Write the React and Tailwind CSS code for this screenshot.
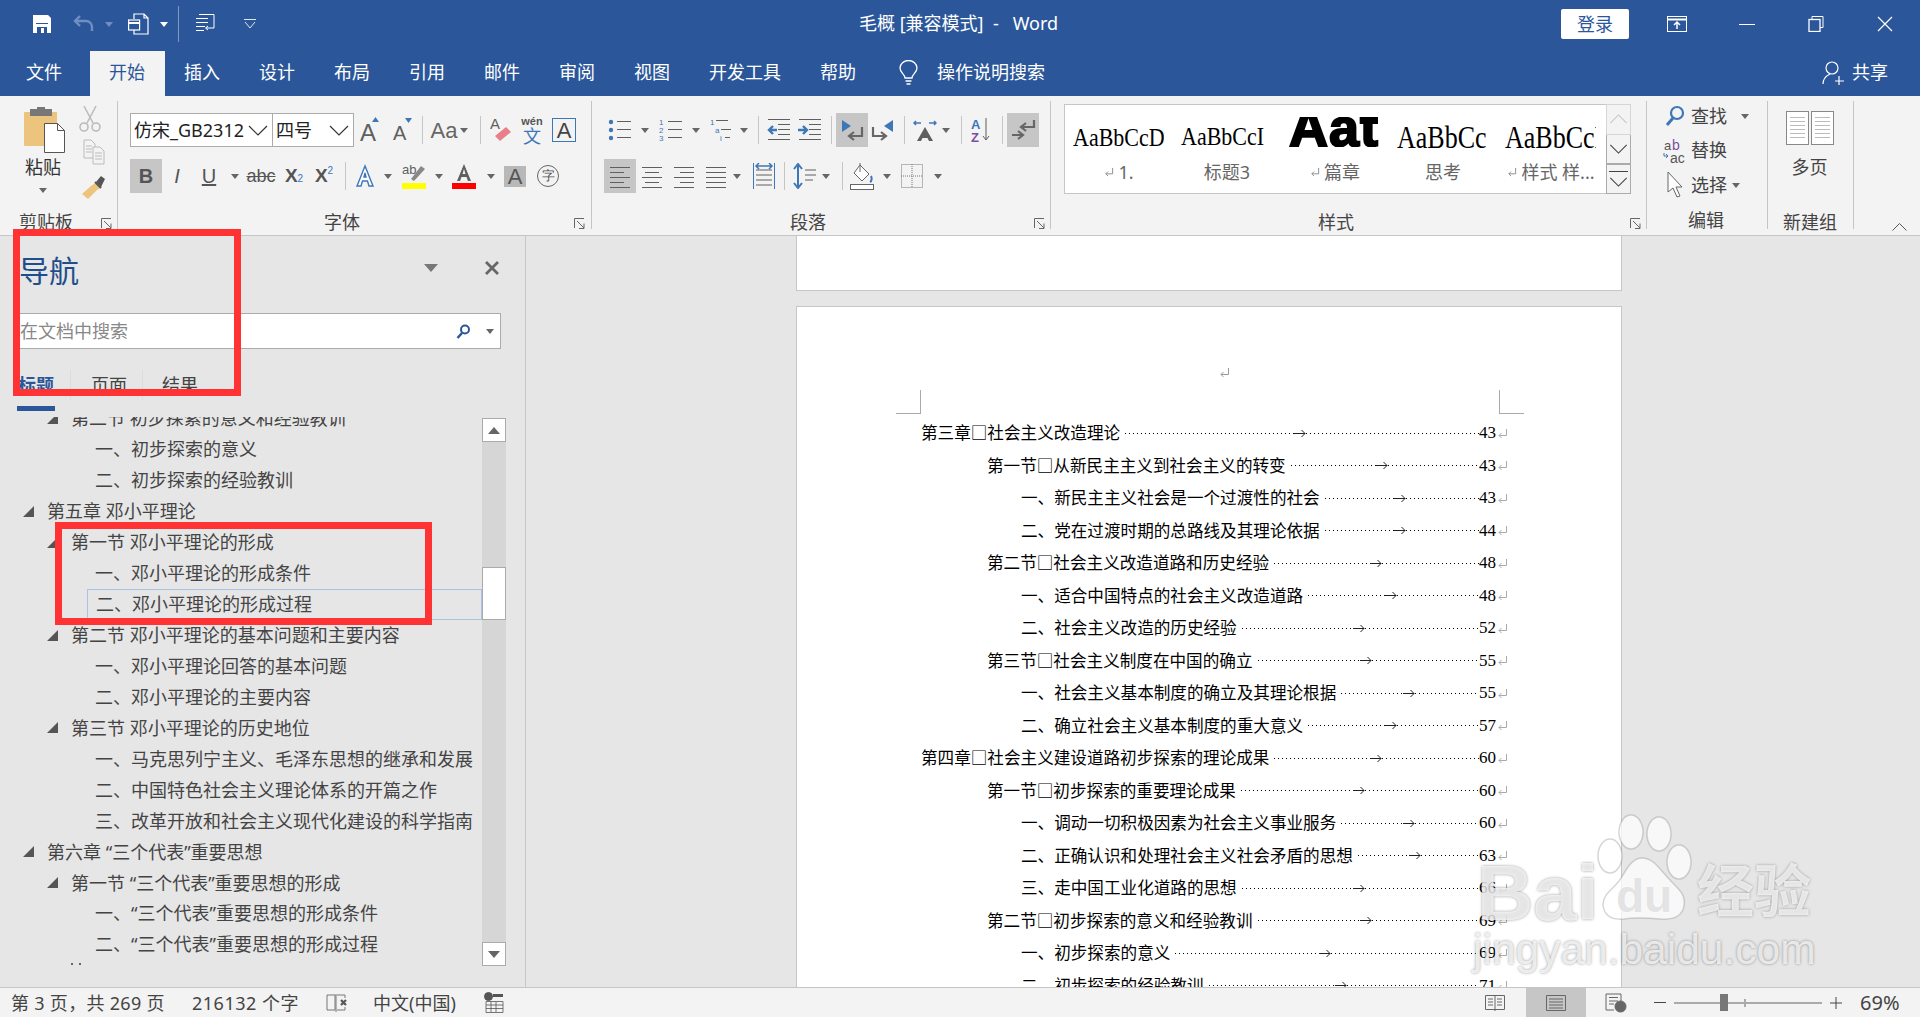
import React from "react";

const ICON = "#5f5f5f";

const Caret = ({ className = "", color = "#666" }) => (
  <svg width="8" height="5" viewBox="0 0 8 5" className={`shrink-0 ${className}`}>
    <path d="M0 0h8L4 5z" fill={color} />
  </svg>
);

const Sep = ({ className = "" }) => <div className={`w-px h-[28px] bg-[#c6c6c6] shrink-0 ${className}`} />;

const Slot = ({ className = "", children }) => (
  <div className={`flex items-center justify-center h-full shrink-0 ${className}`}>{children}</div>
);

const Launcher = ({ className = "" }) => (
  <svg width="11" height="11" viewBox="0 0 11 11" className={`shrink-0 mt-[8px] ${className}`} fill="none" stroke="#666">
    <path d="M.5 10V.5H10M3 3l7 7M10 5.500v5H5" />
  </svg>
);

const Chevron = ({ w = 20, h = 11, color = "#333" }) => (
  <svg width={w} height={h} viewBox="0 0 20 11" fill="none" stroke={color} strokeWidth="1.2">
    <path d="M1 1l9 9 9-9" />
  </svg>
);

const Lines = ({ rows, color = ICON, w = 24, h = 24 }) => (
  <svg width={w} height={h} viewBox={`0 0 ${w} ${h}`} fill="none" stroke={color}>
    <path d={rows.map(([a, b, y]) => `M${a} ${y}.5H${b}`).join("")} />
  </svg>
);

const ReturnMark = ({ color = "#aaa", size = 11 }) => (
  <svg width={size} height={size} viewBox="0 0 11 11" fill="none" stroke={color} className="shrink-0">
    <path d="M9.500 1v6.500H2M4.500 5L2 7.500 4.500 10" />
  </svg>
);

const Group = ({ className = "", children }) => (
  <div className={`mt-[5px] h-[128px] border-r border-[#c6c6c6] shrink-0 ${className}`}>{children}</div>
);

const Label = ({ className = "", text, children }) => (
  <div className="flex h-[24px] mt-[17px]">
    <div className={`text-center text-[18px] leading-[24px] text-[#444] shrink-0 ${className}`}>{text}</div>
    {children}
  </div>
);

const TitleBar = () => (
  <div className="flex items-center h-[51px] pb-[3px] text-white text-[18px] bg-[#2b579a]">
    <div className="flex items-center w-[859px] shrink-0 h-[36px]">
      <svg width="20" height="20" viewBox="0 0 20 20" className="ml-[32px]">
        <path d="M1 1h15l3 3v15H1z" fill="#fff" />
        <path d="M4 9.500h12" stroke="#2b579a" />
        <path d="M5 13h10v6H5z" fill="#2b579a" />
        <rect x="9" y="14" width="3" height="5" fill="#fff" />
      </svg>
      <svg width="22" height="20" viewBox="0 0 22 20" fill="none" stroke="#6f8fc1" strokeWidth="2.400" className="ml-[21px]">
        <path d="M7 2L2 7l5 5M2 7h11a6 6 0 016 6v4" />
      </svg>
      <Caret className="ml-[10px]" color="#6f8fc1" />
      <svg width="22" height="22" viewBox="0 0 22 22" fill="none" stroke="#fff" strokeWidth="1.2" className="ml-[15px]">
        <path d="M6 6V1h10l4 4v16H6v-4M16 1v4h4" />
        <rect x=".6" y="7" width="11" height="10" />
        <path d="M1 10h10" strokeWidth="2" />
      </svg>
      <Caret className="ml-[10px]" color="#fff" />
      <div className="w-px h-[36px] bg-[#7f9ac2] ml-[10px]" />
      <svg width="19" height="20" viewBox="0 0 19 20" fill="none" stroke="#fff" className="ml-[17px]">
        <path d="M3 .5h15M0 4.500h12M0 8.500h12M0 12.500h9M0 16.500h8M18 .5V14h-8M12 12l-2.500 2 2.500 2" />
      </svg>
      <svg width="12" height="10" viewBox="0 0 12 10" fill="none" stroke="#dfe6f1" className="ml-[29px]">
        <path d="M0 .5h12M1 3l5 6 5-6" />
      </svg>
    </div>
    <div className="flex-1 whitespace-pre leading-[24px] -mt-[2px]">毛概 [兼容模式]  -   Word</div>
    <div className="flex items-center shrink-0">
      <div className="w-[68px] h-[30px] bg-white rounded-[2px] text-[#2b579a] text-center leading-[30px]">登录</div>
      <svg width="20" height="16" viewBox="0 0 20 16" fill="none" stroke="#fff" className="ml-[38px]">
        <rect x=".5" y=".5" width="19" height="15" />
        <path d="M1 3.500h18" strokeWidth="2" />
        <path d="M10 13V6M7 9l3-3 3 3" strokeWidth="1.500" />
      </svg>
      <div className="w-[16px] h-px bg-white ml-[52px]" />
      <svg width="16" height="16" viewBox="0 0 16 16" fill="none" stroke="#fff" className="ml-[53px]">
        <path d="M4 3V.5h11v11h-3" />
        <rect x="1" y="3.500" width="11" height="12" strokeWidth="1.3" />
      </svg>
      <svg width="16" height="16" viewBox="0 0 16 16" fill="none" stroke="#fff" strokeWidth="1.2" className="ml-[53px] mr-[27px]">
        <path d="M1 1l14 14M15 1L1 15" />
      </svg>
    </div>
  </div>
);

const TabItem = ({ text, active, className = "" }) => (
  <div className={`px-[19.500px] leading-[43px] shrink-0 ${active ? "bg-[#f3f3f3] text-[#2b579a]" : ""} ${className}`}>{text}</div>
);

const Tabs = () => (
  <div className="flex h-[45px] text-white text-[18px] bg-[#2b579a] pl-[6.500px]">
    <TabItem text="文件" className="mr-[8px]" />
    <TabItem text="开始" active />
    {["插入", "设计", "布局", "引用", "邮件", "审阅", "视图", "开发工具", "帮助"].map((t) => (
      <TabItem key={t} text={t} />
    ))}
    <svg width="19" height="26" viewBox="0 0 19 26" fill="none" stroke="#fff" strokeWidth="1.3" className="self-center ml-[23px] -mt-[1px]">
      <path d="M6 18c0-4-5-5-5-10a8.500 7.500 0 0117 0c0 5-5 6-5 10zM6.500 21h6M7.500 24h4" />
    </svg>
    <div className="ml-[19.500px] leading-[43px]">操作说明搜索</div>
    <div className="ml-auto flex items-center pr-[32px] -mt-[2px]">
      <svg width="22" height="26" viewBox="0 0 22 26" fill="none" stroke="#fff" strokeWidth="1.2">
        <circle cx="10" cy="8" r="6" />
        <path d="M1 24c0-5 3-8 7-10M17 16v9M13 21h9" />
      </svg>
      <div className="ml-[8px]">共享</div>
    </div>
  </div>
);

const ClipboardGroup = () => (
  <Group className="w-[118px]">
    <div className="flex h-[109px]">
      <div className="w-[50px] ml-[18px] flex flex-col items-center">
        <svg width="42" height="46" viewBox="0 0 42 46" className="mt-[6px] ml-[4px] shrink-0">
          <path d="M1 5h32v34H1a1 1 0 01-1-1V6a1 1 0 011-1z" fill="#edc47e" />
          <rect x="6" y="2" width="22" height="7" fill="#777" />
          <rect x="13" y="0" width="8" height="5" fill="#777" />
          <path d="M20.500 16.500h13l7 7v22h-20z" fill="#fff" stroke="#555" />
          <path d="M33.500 16.500v7h7" fill="none" stroke="#555" />
        </svg>
        <div className="text-[18px] leading-[24px] text-[#333] mt-[2px]">粘贴</div>
        <Caret className="mt-[9px]" />
      </div>
      <div className="flex-1 flex flex-col items-center pl-[2px]">
        <svg width="22" height="28" viewBox="0 0 22 28" fill="none" stroke="#bbb" strokeWidth="1.600" className="mt-[4px] mr-[8px]">
          <path d="M5 1l9 17M17 1L8 18" />
          <circle cx="5" cy="22" r="4" />
          <circle cx="17" cy="22" r="4" />
        </svg>
        <svg width="22" height="26" viewBox="0 0 22 26" fill="none" stroke="#bbb" className="mt-[6px]">
          <path d="M1 1h7l4 4v14H1zM3 7h6M3 10h6M3 13h6" />
          <path d="M10 8h7l4 4v13H10zM12 14h7M12 17h7M12 20h7" fill="#f3f3f3" />
        </svg>
        <svg width="24" height="26" viewBox="0 0 24 26" className="mt-[8px]">
          <path d="M15 9l5 5-5 3L6 26l-6-5 9-8z" fill="#edc47e" />
          <path d="M14 9l5-6 4 3-4 8z" fill="#555" />
          <path d="M13 9l6 6" stroke="#555" strokeWidth="2" />
        </svg>
      </div>
    </div>
    <div className="flex h-[24px]">
      <div className="w-[92px] text-center text-[18px] leading-[24px] text-[#444]">剪贴板</div>
      <Launcher className="ml-[9px]" />
    </div>
  </Group>
);

const FontSelect = ({ text, className = "", chevronClass = "" }) => (
  <div className={`flex items-center h-[34px] bg-white border border-[#ababab] shrink-0 text-[18px] text-[#222] ${className}`}>
    <span className="whitespace-nowrap pl-[3px]">{text}</span>
    <span className={`ml-auto ${chevronClass}`}>
      <Chevron />
    </span>
  </div>
);

const FontGroup = () => (
  <Group className="w-[474px]">
    <div className="pt-[12px]">
      <div className="flex items-center h-[34px] pl-[12px]">
        <FontSelect text="仿宋_GB2312" className="w-[143px]" chevronClass="mr-[4px]" />
        <FontSelect text="四号" className="w-[81px] border-l-0" chevronClass="mr-[4px]" />
        <Slot className="w-[26px]">
          <svg width="24" height="26" viewBox="0 0 24 26">
            <text x="5" y="24" fontFamily="Liberation Sans" fontSize="24" fill={ICON}>A</text>
            <path d="M17 5l3.500-5 3.500 5z" fill="#3e77b8" />
          </svg>
        </Slot>
        <Slot className="w-[40px]">
          <svg width="24" height="24" viewBox="0 0 24 24">
            <text x="5" y="22" fontFamily="Liberation Sans" fontSize="20" fill={ICON}>A</text>
            <path d="M17 0h7l-3.500 5z" fill="#3e77b8" />
          </svg>
        </Slot>
        <Sep className="ml-[2px]" />
        <Slot className="w-[24px] ml-[9px] text-[22px] text-[#666] [font-family:'Liberation_Sans']">Aa</Slot>
        <Caret className="ml-[4px]" />
        <Sep className="ml-[12px]" />
        <Slot className="w-[22px] ml-[9px]">
          <svg width="22" height="28" viewBox="0 0 22 28">
            <text x="0" y="13" fontFamily="Liberation Sans" fontSize="15" fill={ICON}>A</text>
            <path d="M5 20L16 11l5 5-11 9z" fill="#e8808a" />
          </svg>
        </Slot>
        <Slot className="w-[22px] ml-[9px]">
          <div className="flex flex-col items-center leading-none">
            <span className="text-[11px] font-bold text-[#555] [font-family:'Liberation_Sans']">wén</span>
            <span className="text-[18px] text-[#3e77b8] leading-[18px]">文</span>
          </div>
        </Slot>
        <div className="w-[24px] h-[24px] ml-[9px] border border-[#3e77b8] flex items-center justify-center text-[22px] text-[#444] [font-family:'Liberation_Sans'] shrink-0">A</div>
      </div>
      <div className="flex items-center h-[34px] pl-[12px] mt-[12px] text-[#555] [font-family:'Liberation_Sans']">
        <Slot className="w-[32px] bg-[#c6c6c6] text-[20px] font-bold">B</Slot>
        <Slot className="w-[30px] text-[20px] italic">I</Slot>
        <Slot className="w-[34px] text-[20px] underline">U</Slot>
        <Caret className="ml-[5px]" />
        <Slot className="w-[44px] text-[18px] line-through">abc</Slot>
        <Slot className="w-[22px] text-[19px] font-bold">X<sub className="text-[10px] text-[#3e77b8] font-normal">2</sub></Slot>
        <Slot className="w-[38px] text-[19px] font-bold">X<sup className="text-[10px] text-[#3e77b8] font-normal">2</sup></Slot>
        <Sep className="ml-[2px]" />
        <Slot className="w-[24px] ml-[7px]">
          <svg width="22" height="24" viewBox="0 0 22 24">
            <path d="M11 2L3 22h4l1.500-5h5l1.500 5h4zM10 13l1-4 1 4z" fill="#fff" stroke="#3e77b8" strokeWidth="1.400" />
          </svg>
        </Slot>
        <Caret className="ml-[7px]" />
        <Slot className="w-[24px] ml-[10px]">
          <svg width="24" height="26" viewBox="0 0 24 26">
            <text x="0" y="11" fontSize="13" fill={ICON} fontFamily="Liberation Sans">ab</text>
            <path d="M9 16L19 3l4 3-11 12z" fill="#888" />
            <rect y="20" width="24" height="6" fill="#ffff00" />
          </svg>
        </Slot>
        <Caret className="ml-[9px]" />
        <Slot className="w-[24px] ml-[9px]">
          <svg width="24" height="26" viewBox="0 0 24 26">
            <path d="M12 1L5 18h3l1.500-4h5l1.500 4h3zM10.500 11l1.500-5 1.500 5z" fill={ICON} />
            <rect y="20" width="24" height="6" fill="#ff0000" />
          </svg>
        </Slot>
        <Caret className="ml-[11px]" />
        <Slot className="w-[22px] !h-[21px] ml-[9px] bg-[#b8b8b8] text-[22px]">A</Slot>
        <Slot className="w-[24px] ml-[10px]">
          <div className="w-[22px] h-[22px] rounded-full border border-[#666] flex items-center justify-center text-[13px] text-[#555]">字</div>
        </Slot>
      </div>
    </div>
    <Label text="字体" className="w-[448px]">
      <Launcher className="ml-[8px]" />
    </Label>
  </Group>
);

const Dir = ({ flip }) => (
  <svg width="24" height="24" viewBox="0 0 24 24" className={flip ? "scale-x-[-1]" : ""}>
    <path d="M2 2l9 6-9 6z" fill="#3e77b8" />
    <path d="M22 9v9H10M14 14l-5 4 5 4" fill="none" stroke="#666" strokeWidth="2.200" />
  </svg>
);

const Bullets = ({ kind }) => (
  <svg width="24" height="24" viewBox="0 0 24 24" fill="none">
    {kind === "dot" &&
      [4, 12, 20].map((y) => <circle key={y} cx="3" cy={y} r="2.200" fill="#3e77b8" />)}
    {kind === "num" &&
      ["1", "2", "3"].map((n, i) => (
        <text key={n} x="0" y={7 + i * 8} fontSize="8" fill="#3e77b8" fontFamily="Liberation Sans">{n}</text>
      ))}
    {kind === "multi" &&
      ["1", "a", "i"].map((n, i) => (
        <text key={n} x={i * 5} y={7 + i * 8} fontSize="8" fill="#3e77b8" fontFamily="Liberation Sans">{n}</text>
      ))}
    <path
      d={kind === "multi" ? "M6 2.500h12M11 11.500h10M15 19.500h5" : "M9 3.500h14M9 11.500h14M9 19.500h14"}
      stroke={ICON}
    />
  </svg>
);

const Indent = ({ inc }) => (
  <svg width="24" height="24" viewBox="0 0 24 24" fill="none" stroke={ICON}>
    <path d="M1 1.500h22M11 6.500h12M11 11.500h12M11 16.500h12M1 21.500h22" />
    <path d={inc ? "M0 12h8M5 8l4 4-4 4" : "M10 12H2M6 8l-4 4 4 4"} stroke="#3e77b8" strokeWidth="2.400" />
  </svg>
);

const ParagraphGroup = () => (
  <Group className="w-[459px]">
    <div className="pt-[12px]">
      <div className="flex items-center h-[34px] pl-[16px]">
        <Slot className="w-[24px]"><Bullets kind="dot" /></Slot>
        <Caret className="ml-[9px]" />
        <Slot className="w-[24px] ml-[10px]"><Bullets kind="num" /></Slot>
        <Caret className="ml-[9px]" />
        <Slot className="w-[24px] ml-[10px]"><Bullets kind="multi" /></Slot>
        <Caret className="ml-[6px]" />
        <Sep className="ml-[10px]" />
        <Slot className="w-[24px] ml-[8px]"><Indent /></Slot>
        <Slot className="w-[24px] ml-[7px]"><Indent inc /></Slot>
        <Sep className="ml-[9px]" />
        <Slot className="w-[32px] ml-[4px] bg-[#c6c6c6]"><Dir /></Slot>
        <Slot className="w-[24px] ml-[3px]"><Dir flip /></Slot>
        <Sep className="ml-[9px]" />
        <Slot className="w-[24px] ml-[8px]">
          <svg width="24" height="22" viewBox="0 0 24 22">
            <path d="M12 8L4 22h4l1.500-3h5l1.500 3h4z" fill={ICON} />
            <path d="M1 4h7M3 2L1 4l2 2M23 4h-7M21 2l2 2-2 2" fill="none" stroke="#3e77b8" strokeWidth="1.500" />
          </svg>
        </Slot>
        <Caret className="ml-[5px]" />
        <Sep className="ml-[11px]" />
        <Slot className="w-[24px] ml-[8px]">
          <svg width="24" height="26" viewBox="0 0 24 26" fill="none">
            <text x="1" y="12" fontSize="13" fontWeight="700" fill="#3e77b8" fontFamily="Liberation Sans">A</text>
            <text x="1" y="25" fontSize="13" fontWeight="700" fill="#7e4c9e" fontFamily="Liberation Sans">Z</text>
            <path d="M16 1v22M13 19l3 4 3-4" stroke={ICON} />
          </svg>
        </Slot>
        <Sep className="ml-[8px]" />
        <Slot className="w-[32px] ml-[4px] bg-[#c6c6c6]">
          <svg width="26" height="24" viewBox="0 0 26 24" fill="none" strokeWidth="2.200">
            <path d="M24 2v7H12M16 5l-5 4 5 4" stroke="#666" />
            <path d="M2 17h10M8 13l5 4-5 4" stroke="#666" />
          </svg>
        </Slot>
      </div>
      <div className="flex items-center h-[34px] pl-[12px] mt-[12px]">
        <Slot className="w-[32px] bg-[#c6c6c6]">
          <Lines rows={[[4, 24, 3], [4, 18, 8], [4, 24, 13], [4, 18, 18], [4, 24, 23]]} w={28} />
        </Slot>
        <Slot className="w-[24px] ml-[4px]">
          <Lines rows={[[2, 22, 3], [5, 19, 8], [2, 22, 13], [5, 19, 18], [2, 22, 23]]} />
        </Slot>
        <Slot className="w-[24px] ml-[8px]">
          <Lines rows={[[2, 22, 3], [8, 22, 8], [2, 22, 13], [8, 22, 18], [2, 22, 23]]} />
        </Slot>
        <Slot className="w-[24px] ml-[8px]">
          <Lines rows={[[2, 22, 3], [2, 22, 8], [2, 22, 13], [2, 22, 18], [2, 22, 23]]} />
        </Slot>
        <Caret className="ml-[5px]" />
        <Slot className="w-[24px] ml-[11px]">
          <svg width="24" height="26" viewBox="0 0 24 26" fill="none">
            <path d="M1.500 0v26M22.500 0v26" stroke="#3e77b8" />
            <path d="M4 7h16M4 12h16M4 17h16M4 22h16" stroke={ICON} />
            <path d="M4 3h16M7 0L4 3l3 3M17 0l3 3-3 3" stroke="#3e77b8" strokeWidth="1.500" />
          </svg>
        </Slot>
        <Sep className="ml-[8px]" />
        <Slot className="w-[24px] ml-[8px]">
          <svg width="24" height="26" viewBox="0 0 24 26" fill="none">
            <path d="M5 1v24M1 6l4-5 4 5M1 20l4 5 4-5" stroke="#3e77b8" strokeWidth="2" />
            <path d="M12 7h11M12 12h11M12 17h8" stroke={ICON} />
          </svg>
        </Slot>
        <Caret className="ml-[5px]" />
        <Sep className="ml-[12px]" />
        <Slot className="w-[24px] ml-[7px]">
          <svg width="24" height="28" viewBox="0 0 24 28" fill="none" stroke="#666">
            <path d="M10 3l9 9-7 7-8-8z" fill="#fff" />
            <path d="M10 1v9" />
            <path d="M21 14c1 2 1 5-1 6" stroke="#3e77b8" strokeWidth="2" />
            <rect x=".5" y="22.500" width="23" height="5" fill="#fff" />
          </svg>
        </Slot>
        <Caret className="ml-[9px]" />
        <Slot className="w-[24px] ml-[9px]">
          <svg width="22" height="24" viewBox="0 0 22 24" fill="none" stroke="#777" strokeDasharray="1 1">
            <path d="M.5.500h21v23H.5zM11 0v24M0 12h22" />
          </svg>
        </Slot>
        <Caret className="ml-[10px]" />
      </div>
    </div>
    <Label text="段落" className="w-[432px]">
      <Launcher className="ml-[10px]" />
    </Label>
  </Group>
);

const StyleItem = ({ label, ret, children }) => (
  <div className="w-[108px] shrink-0 overflow-hidden">
    <div className="h-[48px] mt-[9px] pl-[8px] flex items-center">
      <div className="w-[91px] overflow-hidden whitespace-nowrap [font-family:'Liberation_Serif'] text-black">{children}</div>
    </div>
    <div className="h-[24px] -mt-[2px] flex items-center justify-center gap-[4px] text-[18px] leading-[24px] text-[#666] whitespace-nowrap">
      {ret && <ReturnMark color="#888" size={10} />}
      <span>{label}</span>
    </div>
  </div>
);

const StylesGroup = () => (
  <Group className="w-[596px] pl-[13px]">
    <div className="flex h-[90px] mt-[3px] w-[567px] -mb-[1px]">
      <div className="flex w-[542px] bg-white border border-[#c6c6c6] border-r-0 overflow-hidden">
        <StyleItem label="1." ret><span className="inline-block text-[22px] leading-[30px] scale-y-[1.15]">AaBbCcD</span></StyleItem>
        <StyleItem label="标题3"><span className="inline-block text-[22px] leading-[30px] scale-y-[1.15] -mt-[2px]">AaBbCcI</span></StyleItem>
        <StyleItem label="篇章" ret>
          <div className="h-[30px] overflow-hidden mb-[12px]">
            <div className="text-[54px] font-bold leading-[21px] tracking-[1px] [font-family:'Liberation_Sans'] [-webkit-text-stroke:2px_#000]">Aat</div>
          </div>
        </StyleItem>
        <StyleItem label="思考"><span className="inline-block text-[26px] leading-[36px] scale-y-[1.25]">AaBbCc</span></StyleItem>
        <StyleItem label="样式 样..." ret><span className="inline-block text-[26px] leading-[36px] scale-y-[1.25]">AaBbCcD</span></StyleItem>
      </div>
      <div className="w-[25px] flex flex-col shrink-0">
        <div className="h-[31px] border border-[#d6d6d6] flex items-center justify-center rotate-180">
          <Chevron w={19} h={10} color="#c6c6c6" />
        </div>
        <div className="h-[29px] border border-[#ababab] border-t-0 flex items-center justify-center">
          <Chevron w={19} h={10} color="#444" />
        </div>
        <div className="h-[30px] border border-[#ababab] flex flex-col items-center justify-center gap-[5px]">
          <div className="w-[19px] h-px bg-[#444]" />
          <Chevron w={19} h={10} color="#444" />
        </div>
      </div>
    </div>
    <Label text="样式" className="w-[570px] -ml-[13px]">
      <Launcher className="ml-[9px]" />
    </Label>
  </Group>
);

const EditGroup = () => (
  <Group className="w-[121px]">
    <div className="h-[92px] text-[18px] text-[#444]">
      <div className="flex items-center h-[34.500px] -mt-[2px] pl-[15px]">
        <Slot className="w-[26px]">
          <svg width="20" height="22" viewBox="0 0 20 22" fill="none" stroke="#3e77b8" strokeWidth="2.200">
            <circle cx="12" cy="8" r="6" />
            <path d="M8 13l-6 7" strokeWidth="3" />
          </svg>
        </Slot>
        <div className="ml-[3px]">查找</div>
        <Caret className="ml-[14px]" />
      </div>
      <div className="flex items-center h-[34.500px] pl-[15px]">
        <Slot className="w-[26px]">
          <svg width="24" height="26" viewBox="0 0 24 26">
            <text x="1" y="12" fontSize="13" fill="#555" fontFamily="Liberation Sans">a</text>
            <text x="9" y="12" fontSize="14" fill="#7e4c9e" fontFamily="Liberation Sans">b</text>
            <text x="7" y="25" fontSize="14" fill="#555" fontFamily="Liberation Sans">ac</text>
            <path d="M1 15v3h4M3 16l2 2-2 2" fill="none" stroke="#3e77b8" />
          </svg>
        </Slot>
        <div className="ml-[3px]">替换</div>
      </div>
      <div className="flex items-center h-[34.500px] pl-[15px]">
        <Slot className="w-[26px]">
          <svg width="16" height="28" viewBox="0 0 16 28" fill="none" stroke="#666">
            <path d="M1 1v20l5-4 4 9 3-1-4-9h6z" fill="#fff" />
          </svg>
        </Slot>
        <div className="ml-[3px]">选择</div>
        <Caret className="ml-[5px]" />
      </div>
    </div>
    <Label text="编辑" className="w-[118px]" />
  </Group>
);

const NewGroup = () => (
  <Group className="w-[86px]">
    <div className="h-[92px] flex flex-col items-center pr-[2px]">
      <svg width="48" height="34" viewBox="0 0 48 34" fill="none" className="mt-[10px] shrink-0" stroke="#888">
        <rect x=".5" y=".5" width="22" height="33" fill="#fff" />
        <rect x="25.500" y=".5" width="22" height="33" fill="#fff" />
        <path d="M4 6.500h15M4 10.500h15M4 14.500h15M4 18.500h15M4 22.500h15M4 26.500h15M29 6.500h15M29 10.500h15M29 14.500h15M29 18.500h15M29 22.500h15M29 26.500h15" stroke="#bbb" />
      </svg>
      <div className="text-[18px] leading-[24px] text-[#444] mt-[10px]">多页</div>
    </div>
    <Label text="新建组" className="w-[84px]" />
  </Group>
);

const Ribbon = () => (
  <div className="flex h-[140px] bg-[#f3f3f3] border-b border-[#c6c6c6] shrink-0">
    <ClipboardGroup />
    <FontGroup />
    <ParagraphGroup />
    <StylesGroup />
    <EditGroup />
    <NewGroup />
    <div className="flex-1 flex items-end justify-end pr-[13px] pb-[4px]">
      <svg width="15" height="9" viewBox="0 0 15 9" fill="none" stroke="#555">
        <path d="M.5 8.500l7-7 7 7" />
      </svg>
    </div>
  </div>
);

const treeRows = [
  [2, "第二节 初步探索的意义和经验教训"],
  [3, "一、初步探索的意义"],
  [3, "二、初步探索的经验教训"],
  [1, "第五章 邓小平理论"],
  [2, "第一节 邓小平理论的形成"],
  [3, "一、邓小平理论的形成条件"],
  [3, "二、邓小平理论的形成过程", true],
  [2, "第二节 邓小平理论的基本问题和主要内容"],
  [3, "一、邓小平理论回答的基本问题"],
  [3, "二、邓小平理论的主要内容"],
  [2, "第三节 邓小平理论的历史地位"],
  [3, "一、马克思列宁主义、毛泽东思想的继承和发展"],
  [3, "二、中国特色社会主义理论体系的开篇之作"],
  [3, "三、改革开放和社会主义现代化建设的科学指南"],
  [1, "第六章 “三个代表”重要思想"],
  [2, "第一节 “三个代表”重要思想的形成"],
  [3, "一、“三个代表”重要思想的形成条件"],
  [3, "二、“三个代表”重要思想的形成过程"],
];

const Triangle = () => (
  <svg width="11" height="11" viewBox="0 0 11 11" className="shrink-0">
    <path d="M11 0v11H0z" fill="#555" />
  </svg>
);

const TreeRow = ({ level, text, selected }) => {
  if (level === 3) {
    return (
      <div className={`flex items-center h-[30.940px] ml-[87px] pl-[8px] ${selected ? "border border-[#a9c3e6] w-[395px] pl-[7px]" : ""}`}>
        <span className="whitespace-nowrap">{text}</span>
      </div>
    );
  }
  return (
    <div className={`flex items-center h-[30.940px] ${level === 1 ? "pl-[23px]" : "pl-[47px]"}`}>
      <Triangle />
      <span className="whitespace-nowrap ml-[13px]">{text}</span>
    </div>
  );
};

const NavPanel = () => (
  <div className="w-[526px] shrink-0 h-full border-r border-[#c6c6c6] bg-[#e6e6e6] flex flex-col">
    <div className="flex items-center h-[77px] pb-[7px] shrink-0">
      <div className="text-[30px] leading-[40px] ml-[19px] text-[#1f4e8c]">导航</div>
      <svg width="14" height="8" viewBox="0 0 14 8" className="ml-[345px] mb-[7px]">
        <path d="M0 0h14L7 8z" fill="#777" />
      </svg>
      <svg width="14" height="14" viewBox="0 0 14 14" fill="none" stroke="#666" strokeWidth="2.800" className="ml-[47px] mb-[7px]">
        <path d="M1 1l12 12M13 1L1 13" />
      </svg>
    </div>
    <div className="flex items-center ml-[16px] w-[485px] h-[36px] bg-white border border-[#ababab] shrink-0">
      <span className="ml-[3px] text-[18px] text-[#888]">在文档中搜索</span>
      <svg width="14" height="15" viewBox="0 0 14 15" fill="none" stroke="#2b579a" strokeWidth="2" className="ml-auto">
        <circle cx="9" cy="5.500" r="4" />
        <path d="M6 9l-4.500 5" strokeWidth="2.500" />
      </svg>
      <Caret className="ml-[16px] mr-[6px]" />
    </div>
    <div className="flex h-[30px] mt-[21px] shrink-0 text-[18px] leading-[30px] text-[#444]">
      <div className="ml-[18px] w-[52px] text-[#2b579a] font-bold">标题</div>
      <div className="w-[72px] border-l border-[#dcdcdc] pl-[20px]">页面</div>
      <div className="border-l border-[#dcdcdc] pl-[19px]">结果</div>
    </div>
    <div className="w-[38px] h-[5px] ml-[17px] mt-[6px] bg-[#2b579a] shrink-0" />
    <div className="flex h-[550px] mt-[6px] shrink-0">
      <div className="w-[482px] overflow-hidden shrink-0">
        <div className="-mt-[14px] text-[18px] leading-[24px] text-[#444]">
          {treeRows.map(([level, text, selected]) => (
            <TreeRow key={text} level={level} text={text} selected={selected} />
          ))}
          <div className="flex h-[4px] ml-[71px] gap-[6px] mt-[3px]">
            <div className="w-[2px] h-[2px] bg-[#666]" />
            <div className="w-[2px] h-[2px] bg-[#666]" />
          </div>
        </div>
      </div>
      <div className="w-[24px] mt-px h-[548px] flex flex-col bg-[#d6d6d6] shrink-0">
        <div className="h-[24px] bg-white border border-[#ababab] flex items-center justify-center">
          <svg width="12" height="7" viewBox="0 0 12 7"><path d="M0 7h12L6 0z" fill="#666" /></svg>
        </div>
        <div className="h-[125px]" />
        <div className="h-[53px] bg-white border border-[#ababab]" />
        <div className="flex-1" />
        <div className="h-[24px] bg-white border border-[#ababab] flex items-center justify-center">
          <svg width="12" height="7" viewBox="0 0 12 7"><path d="M0 0h12L6 7z" fill="#666" /></svg>
        </div>
      </div>
    </div>
  </div>
);

const tocRows = [
  [0, "第三章□社会主义改造理论", "43", 1301],
  [1, "第一节□从新民主主义到社会主义的转变", "43", 1383],
  [2, "一、新民主主义社会是一个过渡性的社会", "43", 1401],
  [2, "二、党在过渡时期的总路线及其理论依据", "44", 1401],
  [1, "第二节□社会主义改造道路和历史经验", "48", 1377],
  [2, "一、适合中国特点的社会主义改造道路", "48", 1392],
  [2, "二、社会主义改造的历史经验", "52", 1360],
  [1, "第三节□社会主义制度在中国的确立", "55", 1367],
  [2, "一、社会主义基本制度的确立及其理论根据", "55", 1410],
  [2, "二、确立社会主义基本制度的重大意义", "57", 1392],
  [0, "第四章□社会主义建设道路初步探索的理论成果", "60", 1377],
  [1, "第一节□初步探索的重要理论成果", "60", 1360],
  [2, "一、调动一切积极因素为社会主义事业服务", "60", 1410],
  [2, "二、正确认识和处理社会主义社会矛盾的思想", "63", 1416],
  [2, "三、走中国工业化道路的思想", "66", 1360],
  [1, "第二节□初步探索的意义和经验教训", "69", 1367],
  [2, "一、初步探索的意义", "69", 1326],
  [2, "二、初步探索的经验教训", "71", 1342],
];

const indent = [922, 988, 1022];

const Leader = () => (
  <div className="flex-1 min-w-0 h-px bg-[repeating-linear-gradient(90deg,#000_0_1px,transparent_1px_4px)]" />
);

const TocRow = ({ level, text, page, arrowX }) => {
  const left = indent[level];
  return (
    <div className="flex items-center h-[32.500px] text-black" style={{ marginLeft: left - 922 }}>
      <div className="flex items-center shrink-0" style={{ width: arrowX - left - 6 }}>
        <span className="text-[16.600px] leading-[20px] whitespace-nowrap mr-[5px]">{text}</span>
        <Leader />
      </div>
      <svg width="12" height="9" viewBox="0 0 12 9" fill="none" stroke="#222" className="shrink-0">
        <path d="M0 4.500h11M7.500 1l3.500 3.500L7.500 8" />
      </svg>
      <Leader />
      <span className="w-[18px] shrink-0 text-[17px] leading-[20px] [font-family:'Liberation_Serif']">{page}</span>
      <ReturnMark />
    </div>
  );
};

const DocArea = () => (
  <div className="flex-1 h-full overflow-hidden bg-[#e6e6e6] pl-[270px]">
    <div className="w-[826px] h-[55px] bg-white border border-t-0 border-[#c6c6c6]" />
    <div className="w-[826px] mt-[15px] bg-white border border-[#c6c6c6] h-[800px]">
      <div className="h-[24px] mt-[53px] flex items-center pl-[422px]">
        <ReturnMark color="#999" />
      </div>
      <div className="flex justify-between h-[24px] mt-[6px] ml-[99px] w-[628px]">
        <div className="w-[25px] h-full border-r border-b border-[#aaa]" />
        <div className="w-[25px] h-full border-l border-b border-[#aaa]" />
      </div>
      <div className="ml-[124px] w-[587px] mt-[3px]">
        {tocRows.map(([level, text, page, arrowX]) => (
          <TocRow key={text} level={level} text={text} page={page} arrowX={arrowX} />
        ))}
      </div>
    </div>
  </div>
);

const StatusBar = () => (
  <div className="flex items-center h-[30px] shrink-0 bg-[#f3f3f3] border-t border-[#c6c6c6] text-[18px] leading-[24px] text-[#444] whitespace-pre">
    <div className="ml-[11px] w-[181px] tracking-[0.3px]">第 3 页，共 269 页</div>
    <div className="w-[134px] tracking-[0.5px]">216132 个字</div>
    <svg width="21" height="20" viewBox="0 0 21 20" fill="none" stroke="#777" className="shrink-0">
      <path d="M9 2H1v15h8zM10 1v18M11 2h8v3M11 17h8v-3" />
      <path d="M15 7l5 5M20 7l-5 5" strokeWidth="2.200" stroke="#555" />
    </svg>
    <div className="ml-[26px] w-[111px]">中文(中国)</div>
    <svg width="20" height="22" viewBox="0 0 20 22" fill="none" stroke="#555" className="shrink-0">
      <circle cx="4.500" cy="4.500" r="4" fill="#555" />
      <path d="M9 3h10M9 4h10" strokeWidth="2" />
      <path d="M2 9.500h17v11H2zM2 13h17M2 16.500h17M7 10v10M12 10v10" strokeWidth=".8" />
    </svg>
    <svg width="20" height="20" viewBox="0 0 20 20" fill="none" stroke="#666" className="ml-[981px] shrink-0">
      <path d="M.5 2.500h19v14H.5zM10 2v16M3 6h5M3 9h5M3 12h5M12 6h5M12 9h5M12 12h5" />
    </svg>
    <div className="w-[60px] h-full bg-[#c6c6c6] ml-[21px] flex items-center justify-center shrink-0">
      <svg width="20" height="20" viewBox="0 0 20 20" fill="none" stroke="#666">
        <path d="M.5 2.500h19v15H.5zM3 6h14M3 9h14M3 12h14M3 15h14" />
      </svg>
    </div>
    <svg width="22" height="20" viewBox="0 0 22 20" fill="none" stroke="#666" className="ml-[19px] shrink-0">
      <path d="M16 8V1H1v16h8M4 4.500h9M4 8h9M4 11h5" />
      <circle cx="15.500" cy="13.500" r="5.500" fill="#666" />
    </svg>
    <div className="w-[12px] h-px bg-[#444] ml-[27px] shrink-0" />
    <div className="w-[148px] h-[2px] bg-[#aaa] ml-[8px] flex items-center shrink-0">
      <div className="w-[8px] h-[17px] bg-[#777] ml-[46px] shrink-0" />
      <div className="w-[2px] h-[8px] bg-[#aaa] ml-[16px] shrink-0" />
    </div>
    <svg width="12" height="12" viewBox="0 0 12 12" stroke="#444" className="ml-[8px] shrink-0">
      <path d="M0 6h12M6 0v12" />
    </svg>
    <div className="ml-[18px] text-[20px]">69%</div>
  </div>
);

const Watermark = () => (
  <div className="absolute left-0 top-0 w-full h-full pointer-events-none overflow-hidden">
    <svg width="100" height="110" viewBox="0 0 100 110" className="absolute left-[1595px] top-[812px]">
      <g fill="#fff" fillOpacity=".72" stroke="#777" strokeOpacity=".3" strokeWidth="1.500">
        <ellipse cx="15" cy="44" rx="12" ry="17" />
        <ellipse cx="36" cy="20" rx="12" ry="17" />
        <ellipse cx="64" cy="22" rx="12" ry="17" />
        <ellipse cx="84" cy="50" rx="12" ry="17" />
        <path d="M47 46c12 0 18 12 28 22 9 10 16 14 14 26-2 11-12 14-24 13-12-1-24-2-36 0-12 1-20-3-21-14 0-11 9-15 16-24 7-10 12-23 23-23z" />
      </g>
    </svg>
    <div className="absolute left-[1477px] top-[854px] text-[78px] leading-none font-bold text-white/75 [font-family:'Liberation_Sans'] [text-shadow:0_0_3px_rgba(0,0,0,0.4)]">Bai</div>
    <div className="absolute left-[1616px] top-[873px] text-[46px] leading-none font-bold text-[#d8d8d8]/70 [font-family:'Liberation_Sans'] [text-shadow:0_0_2px_rgba(255,255,255,0.9)]">du</div>
    <div className="absolute left-[1697px] top-[862px] text-[57px] leading-none font-bold text-white/75 [text-shadow:0_0_3px_rgba(0,0,0,0.35)]">经验</div>
    <div className="absolute left-[1473px] top-[929px] text-[42.500px] leading-none text-white/75 [font-family:'Liberation_Sans'] [text-shadow:0_0_3px_rgba(0,0,0,0.4)]">jingyan.baidu.com</div>
  </div>
);

export default function App() {
  return (
    <div className="relative w-[1920px] h-[1017px] overflow-hidden flex flex-col bg-[#e6e6e6] [font-family:'Noto_Sans','Noto_Sans_CJK_SC',sans-serif]">
      <TitleBar />
      <Tabs />
      <Ribbon />
      <div className="flex flex-1 min-h-0">
        <NavPanel />
        <DocArea />
      </div>
      <StatusBar />
      <Watermark />
      <div className="absolute left-[13px] top-[229px] w-[228px] h-[167px] border-[7px] border-[#ff3333]" />
      <div className="absolute left-[55px] top-[522px] w-[377px] h-[103px] border-[7px] border-[#ff3333]" />
    </div>
  );
}
